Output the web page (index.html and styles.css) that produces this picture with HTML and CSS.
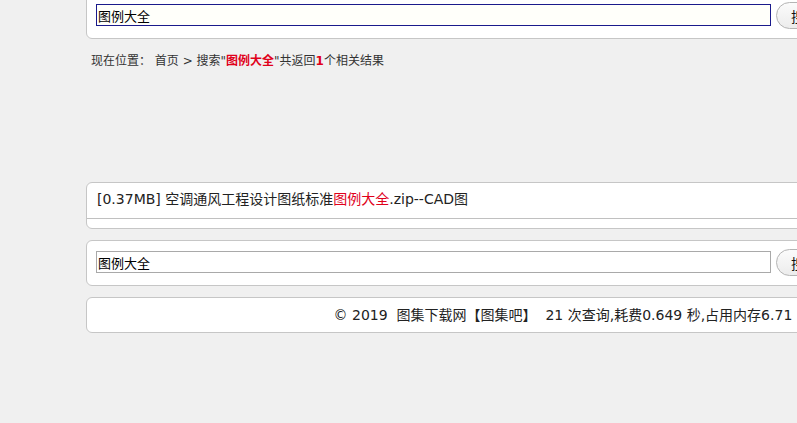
FILE: index.html
```html
<!DOCTYPE html>
<html lang="zh-CN">
<head>
<meta charset="utf-8">
<title>图例大全 - 搜索结果</title>
<link rel="stylesheet" href="styles.css">
</head>
<body>
<div class="page">
  <div class="box search-box">
    <form class="search-form">
      <input class="search-input focused" type="text" value="图例大全">
      <button class="search-btn" type="button">搜索</button>
    </form>
  </div>

  <div class="crumb">现在位置： <a href="#">首页</a> &gt; 搜索"<b class="hl">图例大全</b>"共返回<b class="hl">1</b>个相关结果</div>

  <div class="spacer"></div>

  <div class="box result-box">
    <ul class="result-list">
      <li class="result-item"><a href="#">[0.37MB] 空调通风工程设计图纸标准<span class="red">图例大全</span>.zip--CAD图</a></li>
    </ul>
  </div>

  <div class="box search-box">
    <form class="search-form">
      <input class="search-input" type="text" value="图例大全">
      <button class="search-btn" type="button">搜索</button>
    </form>
  </div>

  <div class="box footer">© 2019&nbsp; 图集下载网【图集吧】&nbsp; 21 次查询,耗费0.649 秒,占用内存6.71 MB</div>
</div>
</body>
</html>
```

FILE: styles.css
```css
html, body {
  margin: 0;
  padding: 0;
  overflow: hidden;
  background: #f0f0f0;
}
body {
  font-family: "DejaVu Sans", Verdana, "Noto Sans CJK SC", sans-serif;
  color: #222;
}
.page {
  width: 980px;
  margin: -7px 0 0 86px;
}
.box {
  box-sizing: border-box;
  background: #fff;
  border: 1px solid #c6c6c6;
  border-radius: 6px;
}
.search-box {
  height: 46px;
  padding: 8px 0 0 9px;
}
.search-form {
  display: flex;
  align-items: flex-start;
  gap: 5px;
  margin: 0;
}
.search-input {
  box-sizing: border-box;
  width: 675px;
  height: 22px;
  margin: 2px 0 0 0;
  padding: 0 1px;
  border: 1px solid #a9a9a9;
  font-family: "Noto Sans CJK SC", sans-serif;
  font-size: 13px;
  color: #000;
  background: #fff;
  outline: none;
}
.search-input.focused {
  border-color: #1a1a8c;
  background: #fffffa;
}
.search-btn {
  box-sizing: border-box;
  height: 27px;
  padding: 0 14px;
  border: 1px solid #b4b4b4;
  border-radius: 14px;
  background: linear-gradient(#fbfbfb, #ececec);
  font-family: "Noto Sans CJK SC", sans-serif;
  font-size: 14px;
  color: #111;
}
.crumb {
  margin: 8px 0 0 5px;
  height: 28px;
  line-height: 28px;
  font-size: 12px;
  color: #333;
  font-family: "DejaVu Sans", "Noto Sans CJK SC", sans-serif;
}
.crumb a {
  color: #333;
  text-decoration: none;
}
.hl {
  color: #e0001b;
  font-weight: bold;
}
.spacer {
  height: 107px;
}
.result-box {
  height: 47px;
  padding: 0 0 10px 0;
}
.result-list {
  list-style: none;
  margin: 0;
  padding: 0;
}
.result-item {
  height: 35px;
  line-height: 33px;
  padding: 0 0 0 10px;
  border-bottom: 1px solid #c0c0c0;
  font-size: 14px;
}
.result-item a {
  color: #222;
  text-decoration: none;
}
.red {
  color: #e0001b;
}
.result-box + .search-box {
  margin-top: 11px;
}
.footer {
  margin-top: 11px;
  height: 36px;
  line-height: 34px;
  text-align: center;
  font-size: 14px;
  color: #222;
}
```
